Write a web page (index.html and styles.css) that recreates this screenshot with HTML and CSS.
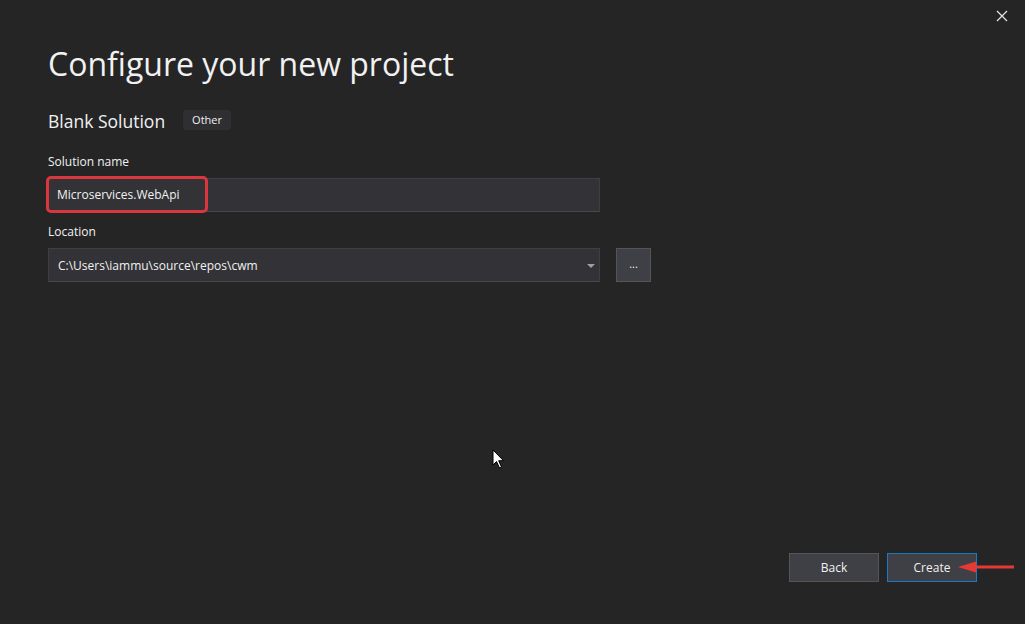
FILE: index.html
```html
<!DOCTYPE html>
<html>
<head>
<meta charset="utf-8">
<link rel="stylesheet" href="styles.css">
</head>
<body>
<div class="dialog">
  <button class="close" aria-label="Close">
    <svg width="12" height="12" viewBox="0 0 12 12"><path d="M1 1L11 11M11 1L1 11" stroke="#e0e0e0" stroke-width="1.3"/></svg>
  </button>
  <main class="content">
    <h1 class="title">Configure your new project</h1>
    <div class="subtitle-row">
      <span class="subtitle">Blank Solution</span>
      <span class="tag">Other</span>
    </div>
    <label class="label label-name">Solution name</label>
    <div class="field-row">
      <div class="input">
        <span class="input-text highlight">Microservices.WebApi</span>
      </div>
    </div>
    <label class="label label-loc">Location</label>
    <div class="field-row">
      <div class="input combo">
        <span class="input-text">C:\Users\iammu\source\repos\cwm</span>
        <svg class="caret" width="8" height="5" viewBox="0 0 8 5"><path d="M0 0H8L4 4Z" fill="#a0a0a0"/></svg>
      </div>
      <button class="browse">...</button>
    </div>
  </main>
  <footer class="footer">
    <button class="btn">Back</button>
    <button class="btn primary">Create</button>
    <svg class="arrow" width="60" height="14" viewBox="0 0 60 14"><path d="M58 7H18" stroke="#e53935" stroke-width="3"/><path d="M2 7L20 1.5V12.5Z" fill="#e53935"/></svg>
  </footer>
  <svg class="cursor" width="13" height="20" viewBox="0 0 13 20"><path d="M1 1V16L4.5 12.5L7.5 19L9.5 18L6.7 11.7H11.5Z" fill="#fff" stroke="#000" stroke-width="1"/></svg>
</div>
</body>
</html>
```
FILE: styles.css
```css
* { box-sizing: border-box; }
html, body { margin: 0; padding: 0; }
body {
  width: 1025px;
  height: 624px;
  background: #252526;
  font-family: "Open Sans", "Noto Sans", sans-serif;
  color: #f1f1f1;
  overflow: hidden;
}
.dialog {
  position: relative;
  width: 1025px;
  height: 624px;
  display: flex;
  flex-direction: column;
}
.close {
  position: absolute;
  top: 10px;
  right: 17px;
  width: 12px;
  height: 12px;
  padding: 0;
  border: 0;
  background: none;
  display: flex;
}
.content {
  padding: 42px 0 0 48px;
  flex: 1;
  display: flex;
  flex-direction: column;
}
.title {
  margin: 0;
  font-weight: 400;
  font-size: 32px;
  line-height: 44px;
  color: #f1f1f1;
}
.subtitle-row {
  margin-top: 23px;
  display: flex;
  align-items: center;
  gap: 18px;
  height: 24px;
}
.subtitle {
  font-size: 17.5px;
  color: #f1f1f1;
}
.tag {
  background: #2f2f31;
  font-size: 11px;
  color: #f1f1f1;
  padding: 2px 9px 3px;
  border-radius: 3px;
  margin-top: -2px;
}
.label {
  font-size: 12px;
  color: #f1f1f1;
  line-height: 16px;
}
.label-name { margin-top: 21px; }
.label-loc { margin-top: 12px; }
.field-row {
  display: flex;
  gap: 16px;
  margin-top: 8px;
}
.input {
  position: relative;
  width: 552px;
  height: 34px;
  background: #333337;
  border: 1px solid #3f3f42;
  border-bottom-color: #48484b;
  display: flex;
  align-items: center;
}
.input-text {
  font-size: 12px;
  color: #f1f1f1;
  padding-left: 9px;
}
.highlight {
  position: absolute;
  left: -3px;
  top: -3px;
  width: 162px;
  height: 37px;
  border: 3px solid #d9363e;
  border-radius: 5px;
  padding-left: 8px;
  display: flex;
  align-items: center;
}
.caret {
  position: absolute;
  right: 4px;
  top: 15px;
}
.browse {
  width: 35px;
  height: 34px;
  background: #3f3f46;
  border: 1px solid #555558;
  color: #f1f1f1;
  font-size: 11px;
  padding: 0 0 4px;
  font-family: inherit;
}
.footer {
  position: relative;
  display: flex;
  justify-content: flex-end;
  gap: 8px;
  padding: 0 48px 42px 0;
}
.btn {
  width: 90px;
  height: 29px;
  background: #3f3f46;
  border: 1px solid #555558;
  color: #f1f1f1;
  font-family: inherit;
  font-size: 12px;
  padding: 0;
}
.btn.primary {
  border: 1px solid #1c7ac4;
}
.arrow {
  position: absolute;
  right: 9px;
  top: 7px;
}
.cursor {
  position: absolute;
  left: 492px;
  top: 449px;
}
```
